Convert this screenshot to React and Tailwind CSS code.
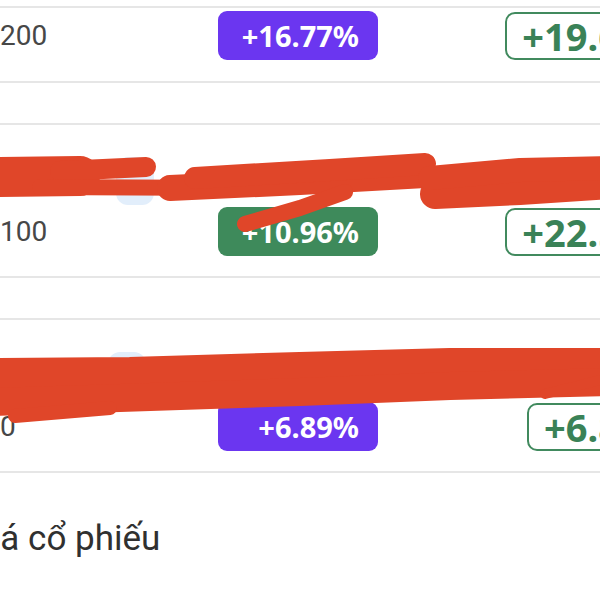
import React from 'react';

const rows = [
  { id: 1, price: '200', change: '+16.77%', tone: 'bg-[#6b36f0]', total: '+19.62%', iconLeft: null, partial: true },
  { id: 2, price: '100', change: '+10.96%', tone: 'bg-[#3e8a5b]', total: '+22.54%', iconLeft: 'ml-[116px]' },
  { id: 3, price: '0', change: '+6.89%', tone: 'bg-[#6b36f0]', total: '+6.85%', iconLeft: 'ml-[108px]' },
];

function BottomRow({ row }) {
  return (
    <div className="flex items-center w-[693px]">
      <span className="w-[218px] shrink-0 text-[28px] leading-none text-[#474747] font-['Roboto',sans-serif]">{row.price}</span>
      <span className={`w-[160px] h-[49px] rounded-[9px] ${row.tone} text-white pr-[19px] flex items-center justify-end text-[29px] font-bold font-['Noto_Sans',sans-serif]`}>
        {row.change}
      </span>
      <span className="ml-auto h-[48px] rounded-[10px] border-2 border-[#418a5e] px-[15px] flex items-center text-[38px] font-bold text-[#3a8257] font-['Noto_Sans',sans-serif] leading-none">
        {row.total}
      </span>
    </div>
  );
}

function Card({ row }) {
  if (row.partial) {
    return (
      <div className="border-b-2 border-[#e6e6e6]">
        <div className="h-[6px]" />
        <div className="border-t-2 border-[#e6e6e6] pt-[3px] pb-[21px]">
          <BottomRow row={row} />
        </div>
      </div>
    );
  }
  return (
    <div className="border-y-2 border-[#e6e6e6] pb-[20px]">
      <div className="h-[82px] flex items-start">
        <div className={`${row.iconLeft} mt-[32px] w-[38px] h-[48px] rounded-[12px] bg-[#e2eefb]`} />
      </div>
      <BottomRow row={row} />
    </div>
  );
}

function Scribbles() {
  const red = '#e04629';
  return (
    <svg className="absolute inset-0 pointer-events-none" width="600" height="600" viewBox="0 0 600 600">
      <g stroke={red} strokeLinecap="round" strokeLinejoin="round" fill="none">
        {/* row 2 */}
        <path d="M-10 177 L80 176" strokeWidth="40" />
        <path d="M60 171 L146 167" strokeWidth="20" />
        <path d="M40 187 L230 188" strokeWidth="16" />
        <path d="M170 188 L300 182 L425 175" strokeWidth="26" />
        <path d="M195 178 L330 170 L425 164" strokeWidth="22" />
        <path d="M245 224 L300 208 L345 192" strokeWidth="16" />
        <path d="M435 194 L520 190 L610 184" strokeWidth="30" />
        <path d="M430 178 L520 170 L610 168" strokeWidth="24" />
        {/* row 3 */}
        <path d="M-10 376 L130 375 L300 370 L450 366 L610 366" strokeWidth="36" />
        <path d="M-10 402 L120 398 L300 392 L450 386 L610 382" strokeWidth="28" />
        <path d="M15 416 L110 408" strokeWidth="14" />
        <path d="M545 394 L600 380" strokeWidth="10" />
      </g>
    </svg>
  );
}

export default function App() {
  return (
    <div className="relative w-[600px] h-[600px] overflow-hidden bg-white">
      <div className="flex flex-col gap-[40px]">
        {rows.map((row) => (
          <Card key={row.id} row={row} />
        ))}
      </div>
      <div className="mt-[48px] ml-[-32px] text-[35px] leading-none text-[#303030] font-['Roboto',sans-serif]">
        Giá cổ phiếu
      </div>
      <Scribbles />
    </div>
  );
}
